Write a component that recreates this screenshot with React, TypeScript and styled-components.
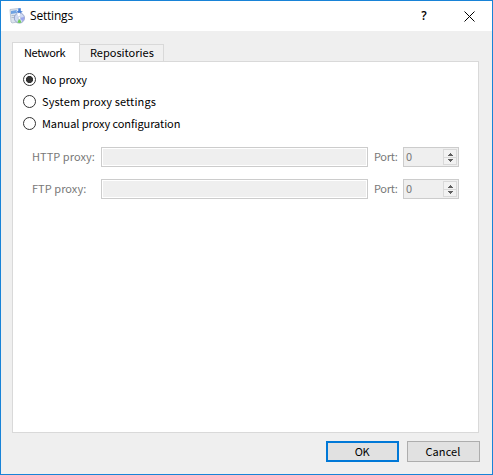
import React from "react";
import styled, { createGlobalStyle } from "styled-components";

const GlobalStyle = createGlobalStyle`
  *, *::before, *::after { box-sizing: border-box; }
  body { margin: 0; background: #f0f0f0; overflow: hidden; }
`;

const Dialog = styled.div`
  width: 493px;
  height: 475px;
  display: flex;
  flex-direction: column;
  background: #efefef;
  border: 1px solid #1883d7;
  font: 11px/16px "Noto Sans CJK JP", sans-serif;
  color: #000;
`;

const TitleBar = styled.header`
  height: 30px;
  flex: none;
  display: flex;
  align-items: center;
  background: #fff;
  padding: 0 17px 0 8px;
`;

const Title = styled.h1`
  flex: 1;
  margin: 0 0 0 5px;
  font: 400 12px/16px "Open Sans", "Noto Sans", sans-serif;
  letter-spacing: -0.2px;
`;

const TitleButton = styled.button<{ $gap?: number }>`
  width: 12px;
  height: 16px;
  padding: 0;
  margin-right: ${(p) => p.$gap ?? 0}px;
  border: 0;
  background: none;
  display: flex;
  align-items: center;
  justify-content: center;
  font: 600 12px/16px "Open Sans", sans-serif;
  color: #000;
`;

const Label = styled.span<{ $spacing?: number }>`
  display: block;
  white-space: nowrap;
  padding-bottom: 2px;
  letter-spacing: ${(p) => p.$spacing ?? 0}px;
`;

const TabBar = styled.nav`
  height: 31px;
  flex: none;
  display: flex;
  align-items: flex-end;
  padding-left: 11px;
`;

const Tab = styled.button<{ $active?: boolean }>`
  width: ${(p) => (p.$active ? 68 : 84)}px;
  height: ${(p) => (p.$active ? 20 : 17)}px;
  margin-bottom: ${(p) => (p.$active ? 0 : 1)}px;
  padding: ${(p) => (p.$active ? "0 0 0 11px" : "0 0 0 10px")};
  display: flex;
  align-items: center;
  border: 1px solid #d9d9d9;
  border-bottom: 0;
  border-left-width: ${(p) => (p.$active ? 1 : 0)}px;
  background: ${(p) => (p.$active ? "#fff" : "#f0f0f0")};
  color: #000;
  font: inherit;
  text-align: left;
  z-index: 1;
`;

const Panel = styled.main`
  width: 467px;
  height: 372px;
  flex: none;
  margin: -1px 0 0 11px;
  border: 1px solid #d9d9d9;
  background: #fff;
  padding: 7px 0 0 10px;
`;

const RadioRow = styled.label`
  height: 22px;
  display: flex;
  align-items: center;
  gap: 6px;
`;

const Radio = styled.span<{ $checked?: boolean }>`
  width: 13px;
  height: 13px;
  margin-top: -1px;
  border: 1px solid #333;
  border-radius: 50%;
  background: ${(p) => (p.$checked ? "radial-gradient(circle, #333 3.2px, #fff 3.9px)" : "#fff")};
`;

const ProxyFields = styled.div`
  display: grid;
  grid-template-columns: 69px 267px 35px 56px;
  row-gap: 12px;
  margin: 12px 0 0 9px;
  align-items: center;
  color: #787878;
`;

const Field = styled.input`
  width: 267px;
  height: 20px;
  border: 1px solid #ccc;
  background: #efefef;
  box-shadow: inset 0 0 0 1px #fff;
  outline: 0;
`;

const PortLabel = styled.div`
  padding-left: 6px;
`;

const SpinBox = styled.div`
  width: 56px;
  height: 20px;
  display: flex;
  align-items: center;
  justify-content: space-between;
  border: 1px solid #ccc;
  background: #efefef;
  padding: 0 1px 0 2px;
`;

const Stepper = styled.div`
  width: 14px;
  height: 16px;
  display: grid;
  grid-template-rows: 8px 6px;
  border: 1px solid #d9d9d9;
  background: #f2f2f2;
`;

const Step = styled.span<{ $divided?: boolean }>`
  display: flex;
  align-items: ${(p) => (p.$divided ? "center" : "flex-start")};
  justify-content: center;
  padding-top: 1px;
  border-bottom: ${(p) => (p.$divided ? "1px solid #d9d9d9" : "0")};
`;

const Actions = styled.footer`
  display: flex;
  justify-content: flex-end;
  gap: 8px;
  padding: 8px 12px 0 0;
`;

const Button = styled.button<{ $primary?: boolean }>`
  width: 73px;
  height: 21px;
  padding: 0 1px 0 0;
  display: flex;
  align-items: center;
  justify-content: center;
  border: ${(p) => (p.$primary ? "2px solid #0078d7" : "1px solid #adadad")};
  background: #e1e1e1;
  color: #000;
  font: inherit;
`;

const AppIcon = () => (
  <svg width="16" height="16" viewBox="0 0 16 16">
    <path d="M1 1.5l8-1 2 2v11l-8 1.5-1-1z" fill="#dce4ee" stroke="#a9b6c8" strokeWidth=".7" />
    <path d="M2 3l6-1v3L2 6z" fill="#6fa2e2" />
    <path d="M2.5 7.5h4M2.5 9.5h3" stroke="#b3bfcf" />
    <path d="M9 0h3v3h2l-3.5 4L7 3h2z" fill="#4580d8" stroke="#fff" strokeWidth=".4" />
    <circle cx="10.4" cy="10" r="5.1" fill="#cfdaf4" stroke="#8b98c2" strokeWidth=".8" />
    <path d="M10.4 10L8 5.6a5 5 0 0 1 3-.5z" fill="#fff" />
    <path d="M10.4 10l4.6-1a5 5 0 0 1-1 4.2z" fill="#9aa5ef" />
    <path d="M10.4 10l-2 4.4a5 5 0 0 0 4 .1z" fill="#70cc58" />
    <circle cx="10.4" cy="10" r="1.4" fill="#fff" stroke="#9ba8c8" strokeWidth=".5" />
  </svg>
);

const Arrow = ({ down }: { down?: boolean }) => (
  <svg width="5" height="3" viewBox="0 0 5 3" shapeRendering="crispEdges">
    <path d={down ? "M0 0h5v1H0zM1 1h3v1H1zM2 2h1v1H2z" : "M2 0h1v1H2zM1 1h3v1H1zM0 2h5v1H0z"} fill="#606060" />
  </svg>
);

const ProxyRow = ({ name, spacing }: { name: string; spacing: number }) => (
  <>
    <Label $spacing={spacing}>{name}</Label>
    <Field disabled aria-label={name} />
    <PortLabel>
      <Label $spacing={-0.3}>Port:</Label>
    </PortLabel>
    <SpinBox>
      <Label>0</Label>
      <Stepper>
        <Step $divided>
          <Arrow />
        </Step>
        <Step>
          <Arrow down />
        </Step>
      </Stepper>
    </SpinBox>
  </>
);

export default function App() {
  return (
    <>
      <GlobalStyle />
      <Dialog>
        <TitleBar>
          <AppIcon />
          <Title>Settings</Title>
          <TitleButton $gap={33}>?</TitleButton>
          <TitleButton aria-label="Close">
            <svg width="11" height="11" viewBox="0 0 11 11">
              <path d="M.5 .5l10 10M10.5 .5l-10 10" stroke="#000" strokeWidth="1" />
            </svg>
          </TitleButton>
        </TitleBar>
        <TabBar>
          <Tab $active>
            <Label $spacing={-0.4}>Network</Label>
          </Tab>
          <Tab>
            <Label>Repositories</Label>
          </Tab>
        </TabBar>
        <Panel>
          <RadioRow>
            <Radio $checked />
            <Label $spacing={-0.1}>No proxy</Label>
          </RadioRow>
          <RadioRow>
            <Radio />
            <Label $spacing={0.13}>System proxy settings</Label>
          </RadioRow>
          <RadioRow>
            <Radio />
            <Label $spacing={-0.07}>Manual proxy configuration</Label>
          </RadioRow>
          <ProxyFields>
            <ProxyRow name="HTTP proxy:" spacing={0.05} />
            <ProxyRow name="FTP proxy:" spacing={0.05} />
          </ProxyFields>
        </Panel>
        <Actions>
          <Button $primary>
            <Label $spacing={-0.3}>OK</Label>
          </Button>
          <Button>
            <Label $spacing={0.1}>Cancel</Label>
          </Button>
        </Actions>
      </Dialog>
    </>
  );
}
